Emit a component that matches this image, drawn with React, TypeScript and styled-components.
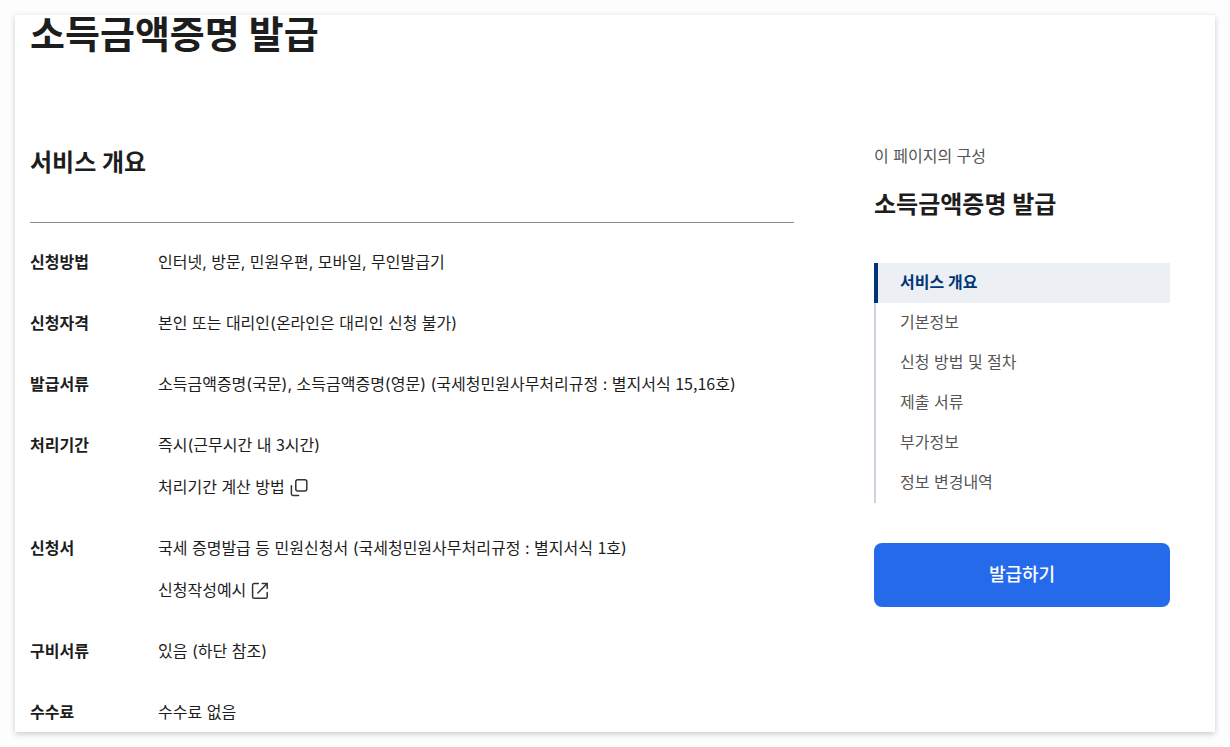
import React from "react";
import styled, { createGlobalStyle } from "styled-components";

const GlobalStyle = createGlobalStyle`
  *, *::before, *::after { box-sizing: border-box; }
  body {
    margin: 0;
    background: #fdfdfd;
    color: #1d1d1d;
    font-family: Inter, "Noto Sans CJK KR", sans-serif;
    font-size: 16px;
    line-height: 25px;
    word-break: keep-all;
  }
  h1, h2, p, dl, dd, ul { margin: 0; padding: 0; }
  a { color: inherit; text-decoration: none; }
`;

const Page = styled.div`
  padding: 15px;
`;

const Sheet = styled.div`
  padding: 0 45px 7px 15px;
  background: #fff;
  box-shadow: 0 2px 6px rgba(0, 0, 0, 0.2);
`;

const PageTitle = styled.h1`
  font-size: 38px;
  line-height: 38px;
  font-weight: 700;
`;

const Columns = styled.div`
  display: flex;
  align-items: flex-start;
  gap: 80px;
  padding-top: 91px;
`;

const Main = styled.main`
  flex: 1;
  min-width: 0;
`;

const SectionTitle = styled.h2`
  font-size: 24px;
  line-height: 37px;
  font-weight: 700;
`;

const InfoList = styled.dl`
  display: flex;
  flex-direction: column;
  gap: 36px;
  margin-top: 41px;
  padding-top: 27px;
  border-top: 1px solid #8a8a8a;
`;

const InfoRow = styled.div`
  display: grid;
  grid-template-columns: 128px 1fr;
`;

const Term = styled.dt`
  font-weight: 700;
`;

const Detail = styled.dd`
  display: flex;
  flex-direction: column;
  align-items: flex-start;
  gap: 17px;
`;

const Digits = styled.span`
  font-family: "Noto Sans CJK KR", sans-serif;
  line-height: 1;
`;

const TextLink = styled.a`
  display: inline-flex;
  align-items: center;
  gap: 4px;
`;

const TextButton = styled.button`
  display: inline-flex;
  align-items: center;
  gap: 4px;
  padding: 0;
  border: 0;
  background: none;
  color: inherit;
  font: inherit;
  cursor: pointer;
`;

const Icon = styled.svg`
  width: 20px;
  height: 20px;
  flex: none;
  fill: none;
  stroke: #333;
  stroke-width: 1.5;
  stroke-linecap: round;
`;

const Aside = styled.aside`
  width: 296px;
  flex: none;
`;

const AsideLabel = styled.p`
  margin-bottom: 18px;
  color: #555;
  line-height: 24px;
`;

const NavList = styled.ul`
  margin: 40px 0;
  list-style: none;
`;

const NavLink = styled.a<{ $active: boolean }>`
  display: block;
  height: 40px;
  padding-left: ${(p) => (p.$active ? 22 : 24)}px;
  border-left: ${(p) => (p.$active ? "4px solid #003675" : "2px solid #cdd3de")};
  background: ${(p) => (p.$active ? "#ecf0f5" : "transparent")};
  color: ${(p) => (p.$active ? "#003675" : "#555")};
  font-weight: ${(p) => (p.$active ? 700 : 400)};
  line-height: 38px;
`;

const IssueButton = styled.button`
  width: 100%;
  height: 64px;
  padding: 0 0 2px;
  border: 0;
  border-radius: 8px;
  background: #256aea;
  color: #fff;
  font: inherit;
  font-size: 18px;
  font-weight: 500;
  cursor: pointer;
`;

const PopupIcon = () => (
  <Icon viewBox="0 0 20 20" aria-hidden="true">
    <rect x="6.8" y="1.8" width="11" height="11.2" rx="2" />
    <path d="M2.4 7.8v8a1.6 1.6 0 0 0 1.6 1.6h5.6" />
  </Icon>
);

const ExternalIcon = () => (
  <Icon viewBox="0 0 20 20" aria-hidden="true">
    <path d="M8.3 2.5H4.2a1.6 1.6 0 0 0-1.6 1.6v11.6a1.6 1.6 0 0 0 1.6 1.6h11.4a1.6 1.6 0 0 0 1.6-1.6v-4.2" />
    <path d="M12.2 2.5h5v5M17 2.7 7.8 12" />
  </Icon>
);

/* Sets the runs of digits in a text in the Korean face. */
const DetailText = ({ text }: { text: string }) => (
  <span>
    {text
      .split(/(\d[\d,]*)/)
      .map((part, i) => (i % 2 ? <Digits key={i}>{part}</Digits> : part))}
  </span>
);

const rows: { term: string; text: string; extra?: React.ReactNode }[] = [
  { term: "신청방법", text: "인터넷, 방문, 민원우편, 모바일, 무인발급기" },
  { term: "신청자격", text: "본인 또는 대리인(온라인은 대리인 신청 불가)" },
  {
    term: "발급서류",
    text: "소득금액증명(국문), 소득금액증명(영문) (국세청민원사무처리규정 : 별지서식 15,16호)",
  },
  {
    term: "처리기간",
    text: "즉시(근무시간 내 3시간)",
    extra: (
      <TextButton type="button">
        처리기간 계산 방법
        <PopupIcon />
      </TextButton>
    ),
  },
  {
    term: "신청서",
    text: "국세 증명발급 등 민원신청서 (국세청민원사무처리규정 : 별지서식 1호)",
    extra: (
      <TextLink href="#example">
        신청작성예시
        <ExternalIcon />
      </TextLink>
    ),
  },
  { term: "구비서류", text: "있음 (하단 참조)" },
  { term: "수수료", text: "수수료 없음" },
];

const sections = [
  "서비스 개요",
  "기본정보",
  "신청 방법 및 절차",
  "제출 서류",
  "부가정보",
  "정보 변경내역",
];

export default function App() {
  return (
    <>
      <GlobalStyle />
      <Page lang="ko">
        <Sheet>
          <PageTitle>소득금액증명 발급</PageTitle>
          <Columns>
            <Main>
              <SectionTitle>서비스 개요</SectionTitle>
              <InfoList>
                {rows.map((row) => (
                  <InfoRow key={row.term}>
                    <Term>{row.term}</Term>
                    <Detail>
                      <DetailText text={row.text} />
                      {row.extra}
                    </Detail>
                  </InfoRow>
                ))}
              </InfoList>
            </Main>
            <Aside>
              <AsideLabel>이 페이지의 구성</AsideLabel>
              <SectionTitle>소득금액증명 발급</SectionTitle>
              <nav aria-label="이 페이지의 구성">
                <NavList>
                  {sections.map((name, i) => (
                    <li key={name}>
                      <NavLink
                        href={`#section-${i + 1}`}
                        $active={i === 0}
                        aria-current={i === 0 ? "true" : undefined}
                      >
                        {name}
                      </NavLink>
                    </li>
                  ))}
                </NavList>
              </nav>
              <IssueButton type="button">발급하기</IssueButton>
            </Aside>
          </Columns>
        </Sheet>
      </Page>
    </>
  );
}
